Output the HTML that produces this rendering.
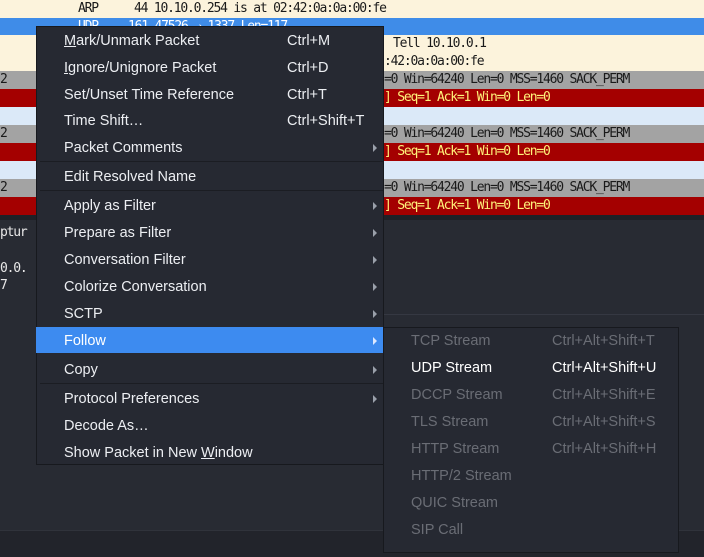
<!DOCTYPE html>
<html><head><meta charset="utf-8"><style>
*{margin:0;padding:0;box-sizing:border-box}
body{width:704px;height:557px;overflow:hidden;background:#282b33;position:relative;font-family:"Liberation Sans",sans-serif}
.r{position:absolute;left:0;width:704px;height:18px;font-family:"DejaVu Sans Mono",monospace;font-size:13px;letter-spacing:-1.2px;line-height:18px;white-space:pre;color:#1a1a1a}
.cr{background:#fcf3dc}.gr{background:#a3a3a3}.rd{background:#a40000;color:#fff27a}.lb{background:#dbe9f8}.sel{background:#3f8ce8;color:#fff}
.t{position:absolute;white-space:pre}
.m{position:absolute;font-size:14.5px;color:#eceef2}
.mono{font-family:"DejaVu Sans Mono",monospace;font-size:13px;letter-spacing:-1.2px;color:#e8e8e8;position:absolute;white-space:pre}
.arr{position:absolute;width:0;height:0;border-top:4px solid transparent;border-bottom:4px solid transparent;border-left:4px solid #9aa0aa}
.sep{position:absolute;height:1px;background:#1b1d23}
</style></head><body>
<div class="r cr" style="top:0"><span class="t" style="left:78px">ARP</span><span class="t" style="left:134px">44 10.10.0.254 is at 02:42:0a:0a:00:fe</span></div>
<div class="r sel" style="top:18px"><span class="t" style="left:78px">UDP</span><span class="t" style="left:128px">161 47526 → 1337 Len=117</span></div>
<div class="r cr" style="top:35px"><span class="t" style="left:393px">Tell 10.10.0.1</span></div>
<div class="r cr" style="top:53px"><span class="t" style="left:384px">:42:0a:0a:00:fe</span></div>
<div class="r gr" style="top:71px"><span class="t" style="left:0">2</span><span class="t" style="left:384px">=0 Win=64240 Len=0 MSS=1460 SACK_PERM</span></div>
<div class="r rd" style="top:89px"><span class="t" style="left:384px">] Seq=1 Ack=1 Win=0 Len=0</span></div>
<div class="r lb" style="top:107px"></div>
<div class="r gr" style="top:125px"><span class="t" style="left:0">2</span><span class="t" style="left:384px">=0 Win=64240 Len=0 MSS=1460 SACK_PERM</span></div>
<div class="r rd" style="top:143px"><span class="t" style="left:384px">] Seq=1 Ack=1 Win=0 Len=0</span></div>
<div class="r lb" style="top:161px"></div>
<div class="r gr" style="top:179px"><span class="t" style="left:0">2</span><span class="t" style="left:384px">=0 Win=64240 Len=0 MSS=1460 SACK_PERM</span></div>
<div class="r rd" style="top:197px"><span class="t" style="left:384px">] Seq=1 Ack=1 Win=0 Len=0</span></div>
<div style="position:absolute;left:0;top:215px;width:704px;height:5px;background:#1f2127"></div>
<div class="mono" style="left:0;top:225px">ptur</div>
<div class="mono" style="left:0;top:261px">0.0.</div>
<div class="mono" style="left:0;top:278px">7</div>
<div class="sep" style="left:383px;top:314px;width:321px;background:#353842"></div>
<div style="position:absolute;left:0;top:530px;width:704px;height:27px;background:#22242b;border-top:1px solid #30333b"></div>

<div style="position:absolute;left:36px;top:26px;width:348px;height:439px;background:#262932;border:1px solid #17191e"></div>
<div style="position:absolute;left:36px;top:327px;width:347px;height:26px;background:#3d8bf0"></div>
<div class="sep" style="left:40px;top:161px;width:343px"></div>
<div class="sep" style="left:40px;top:190px;width:343px"></div>
<div class="sep" style="left:40px;top:383px;width:343px"></div>

<div class="m" style="left:64px;top:33px"><u>M</u>ark/Unmark Packet</div><div class="m" style="left:287px;top:33px">Ctrl+M</div>
<div class="m" style="left:64px;top:60px"><u>I</u>gnore/Unignore Packet</div><div class="m" style="left:287px;top:60px">Ctrl+D</div>
<div class="m" style="left:64px;top:87px">Set/Unset Time Reference</div><div class="m" style="left:287px;top:87px">Ctrl+T</div>
<div class="m" style="left:64px;top:113px">Time Shift…</div><div class="m" style="left:287px;top:113px">Ctrl+Shift+T</div>
<div class="m" style="left:64px;top:140px">Packet Comments</div><div class="arr" style="left:373px;top:144px"></div>
<div class="m" style="left:64px;top:169px">Edit Resolved Name</div>
<div class="m" style="left:64px;top:198px">Apply as Filter</div><div class="arr" style="left:373px;top:202px"></div>
<div class="m" style="left:64px;top:225px">Prepare as Filter</div><div class="arr" style="left:373px;top:229px"></div>
<div class="m" style="left:64px;top:252px">Conversation Filter</div><div class="arr" style="left:373px;top:256px"></div>
<div class="m" style="left:64px;top:279px">Colorize Conversation</div><div class="arr" style="left:373px;top:283px"></div>
<div class="m" style="left:64px;top:306px">SCTP</div><div class="arr" style="left:373px;top:310px"></div>
<div class="m" style="left:64px;top:333px;color:#fff">Follow</div><div class="arr" style="left:373px;top:337px;border-left-color:#dce8ff"></div>
<div class="m" style="left:64px;top:362px">Copy</div><div class="arr" style="left:373px;top:366px"></div>
<div class="m" style="left:64px;top:391px">Protocol Preferences</div><div class="arr" style="left:373px;top:395px"></div>
<div class="m" style="left:64px;top:418px">Decode As…</div>
<div class="m" style="left:64px;top:445px">Show Packet in New <u>W</u>indow</div>

<div style="position:absolute;left:383px;top:327px;width:296px;height:226px;background:#262932;border:1px solid #17191e"></div>
<div class="m" style="left:411px;top:333px;color:#6a6d75">TCP Stream</div><div class="m" style="left:552px;top:333px;color:#6a6d75">Ctrl+Alt+Shift+T</div>
<div class="m" style="left:411px;top:360px;color:#fff">UDP Stream</div><div class="m" style="left:552px;top:360px;color:#fff">Ctrl+Alt+Shift+U</div>
<div class="m" style="left:411px;top:387px;color:#6a6d75">DCCP Stream</div><div class="m" style="left:552px;top:387px;color:#6a6d75">Ctrl+Alt+Shift+E</div>
<div class="m" style="left:411px;top:414px;color:#6a6d75">TLS Stream</div><div class="m" style="left:552px;top:414px;color:#6a6d75">Ctrl+Alt+Shift+S</div>
<div class="m" style="left:411px;top:441px;color:#6a6d75">HTTP Stream</div><div class="m" style="left:552px;top:441px;color:#6a6d75">Ctrl+Alt+Shift+H</div>
<div class="m" style="left:411px;top:468px;color:#6a6d75">HTTP/2 Stream</div>
<div class="m" style="left:411px;top:495px;color:#6a6d75">QUIC Stream</div>
<div class="m" style="left:411px;top:522px;color:#6a6d75">SIP Call</div>
</body></html>
